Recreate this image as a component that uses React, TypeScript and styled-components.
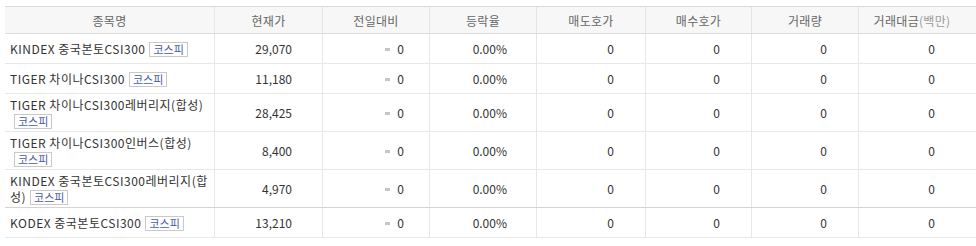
import React from "react";
import styled, { createGlobalStyle } from "styled-components";

const Global = createGlobalStyle`
  html, body { margin: 0; padding: 0; background: #fff; overflow: hidden; }
  body {
    padding: 6px 0 0 5px;
    font-family: "Noto Sans CJK KR", "Noto Sans", sans-serif;
    font-size: 12px;
    color: #333;
  }
`;

const COLS = "209px 108px 107px 107px 109px 106px 107px 1fr";

const Table = styled.div`
  width: 971px;
`;

const HeaderRow = styled.div`
  display: grid;
  grid-template-columns: ${COLS};
  background: #f7f7f7;
  border-top: 1px solid #d9d9d9;
  border-bottom: 1px solid #dcdcdc;
`;

const HeadCell = styled.div<{ $first?: boolean; $pr?: number }>`
  height: 26px;
  display: flex;
  align-items: center;
  justify-content: center;
  padding-right: ${(p) => p.$pr ?? 0}px;
  color: #666;
  font-size: 12px;
  letter-spacing: 0.3px;
  border-left: ${(p) => (p.$first ? "none" : "1px solid #e6e6e6")};
`;

const Unit = styled.span`
  color: #999;
`;

const Row = styled.div<{ $strong?: boolean }>`
  display: grid;
  grid-template-columns: ${COLS};
  border-bottom: 1px solid ${(p) => (p.$strong ? "#d4d4d4" : "#e8e8e8")};
`;

const NameCell = styled.div`
  min-height: 29px;
  box-sizing: border-box;
  padding: 3px 1px 2px 5px;
  display: flex;
  align-items: center;
`;

const NameText = styled.div`
  line-height: 16px;
  color: #333;
  font-size: 12px;
  letter-spacing: 0.5px;
`;

const Badge = styled.span`
  display: inline-block;
  margin-left: 4px;
  padding: 0 3px;
  border: 1px solid #c9c9c9;
  color: #4b5ca4;
  font-size: 11px;
  line-height: 13px;
  letter-spacing: 0;
  vertical-align: bottom;
`;

const Cell = styled.div<{ $pr: number }>`
  display: flex;
  align-items: center;
  justify-content: flex-end;
  padding-right: ${(p) => p.$pr}px;
  border-left: 1px solid #e6e6e6;
  color: #333;
  font-size: 12px;
`;

const Flat = styled.span`
  display: inline-block;
  width: 5px;
  height: 3px;
  background: #c6c6c6;
  margin-right: 7px;
  margin-top: 1px;
`;

type Item = { name: string; price: string; strong?: boolean };

const items: Item[] = [
  { name: "KINDEX 중국본토CSI300", price: "29,070" },
  { name: "TIGER 차이나CSI300", price: "11,180" },
  { name: "TIGER 차이나CSI300레버리지(합성)", price: "28,425" },
  { name: "TIGER 차이나CSI300인버스(합성)", price: "8,400" },
  { name: "KINDEX 중국본토CSI300레버리지(합성)", price: "4,970", strong: true },
  { name: "KODEX 중국본토CSI300", price: "13,210" },
];

export default function App() {
  return (
    <>
      <Global />
      <Table>
        <HeaderRow>
          <HeadCell $first>종목명</HeadCell>
          <HeadCell>현재가</HeadCell>
          <HeadCell>전일대비</HeadCell>
          <HeadCell>등락율</HeadCell>
          <HeadCell>매도호가</HeadCell>
          <HeadCell>매수호가</HeadCell>
          <HeadCell>거래량</HeadCell>
          <HeadCell $pr={11}>
            거래대금<Unit>(백만)</Unit>
          </HeadCell>
        </HeaderRow>
        {items.map((it) => (
          <Row key={it.name} $strong={it.strong}>
            <NameCell>
              <NameText>
                {it.name}
                <Badge>코스피</Badge>
              </NameText>
            </NameCell>
            <Cell $pr={30}>{it.price}</Cell>
            <Cell $pr={25}>
              <Flat />0
            </Cell>
            <Cell $pr={29}>0.00%</Cell>
            <Cell $pr={31}>0</Cell>
            <Cell $pr={31}>0</Cell>
            <Cell $pr={31}>0</Cell>
            <Cell $pr={41}>0</Cell>
          </Row>
        ))}
      </Table>
    </>
  );
}
